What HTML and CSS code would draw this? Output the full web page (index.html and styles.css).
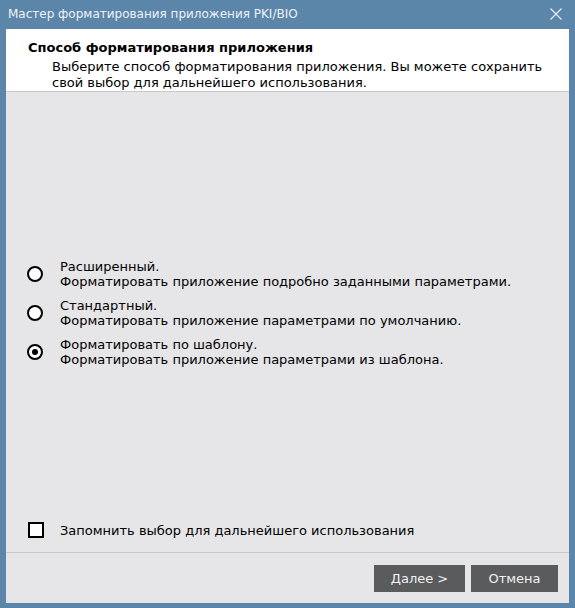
FILE: index.html
```html
<!DOCTYPE html>
<html lang="ru">
<head>
<meta charset="utf-8">
<title>Мастер форматирования приложения PKI/BIO</title>
<link rel="stylesheet" href="styles.css">
</head>
<body>
<div class="window">
  <div class="titlebar">
    <span class="title">Мастер форматирования приложения PKI/BIO</span>
    <svg class="close" width="12" height="12" viewBox="0 0 12 12"><path d="M0.5 0.5 L11.5 11.5 M11.5 0.5 L0.5 11.5" stroke="#e4e9ef" stroke-width="1.3" fill="none"/></svg>
  </div>
  <div class="content">
    <div class="header">
      <div class="h-title">Способ форматирования приложения</div>
      <div class="h-sub">Выберите способ форматирования приложения. Вы можете сохранить свой выбор для дальнейшего использования.</div>
    </div>
    <div class="main">
      <div class="options">
        <div class="option">
          <span class="radio"></span>
          <div class="label"><div>Расширенный.</div><div>Форматировать приложение подробно заданными параметрами.</div></div>
        </div>
        <div class="option">
          <span class="radio"></span>
          <div class="label"><div>Стандартный.</div><div>Форматировать приложение параметрами по умолчанию.</div></div>
        </div>
        <div class="option">
          <span class="radio checked"></span>
          <div class="label"><div>Форматировать по шаблону.</div><div>Форматировать приложение параметрами из шаблона.</div></div>
        </div>
      </div>
      <div class="remember">
        <span class="checkbox"></span>
        <span>Запомнить выбор для дальнейшего использования</span>
      </div>
    </div>
    <div class="footer">
      <button class="btn btn-next">Далее &gt;</button>
      <button class="btn btn-cancel">Отмена</button>
    </div>
  </div>
</div>
</body>
</html>
```
FILE: styles.css
```css
html, body {
  margin: 0;
  padding: 0;
}
body {
  width: 575px;
  height: 608px;
  font-family: "DejaVu Sans", "Liberation Sans", sans-serif;
  font-size: 13px;
  color: #000;
  overflow: hidden;
}
.window {
  width: 575px;
  height: 608px;
  box-sizing: border-box;
  background: #5b86aa;
  padding: 0 6px 5px 6px;
  display: flex;
  flex-direction: column;
}
.titlebar {
  height: 29px;
  flex: 0 0 29px;
  display: flex;
  align-items: center;
  justify-content: space-between;
  color: #eef2f6;
  padding: 0 7px 0 2px;
}
.title {
  font-size: 12px;
  line-height: 16px;
  margin-top: -1px;
}
.close {
  display: block;
  margin-top: -2px;
}
.content {
  flex: 1;
  display: flex;
  flex-direction: column;
  background: #e6e6e8;
}
.header {
  background: #fff;
  height: 63px;
  box-sizing: border-box;
  border-bottom: 1px solid #c9c9cb;
  padding: 10px 0 0 22px;
  flex: 0 0 63px;
}
.h-title {
  font-weight: bold;
  line-height: 18px;
}
.h-sub {
  padding-left: 24px;
  margin-top: 2px;
  width: 500px;
  line-height: 16px;
}
.main {
  flex: 1;
  display: flex;
  flex-direction: column;
  border-bottom: 1px solid #c9c9cb;
}
.options {
  padding-top: 167px;
  padding-left: 21px;
  display: flex;
  flex-direction: column;
  gap: 9px;
}
.option {
  display: flex;
  align-items: center;
}
.label {
  line-height: 15px;
  margin-left: 17px;
}
.radio {
  width: 16px;
  height: 16px;
  box-sizing: border-box;
  border: 2px solid #000;
  border-radius: 50%;
  background: #fff;
  position: relative;
  flex: 0 0 16px;
}
.radio.checked::after {
  content: "";
  position: absolute;
  left: 3px;
  top: 3px;
  width: 6px;
  height: 6px;
  border-radius: 50%;
  background: #000;
}
.remember {
  margin-top: auto;
  padding: 0 0 14px 22px;
  display: flex;
  align-items: center;
}
.checkbox {
  width: 16px;
  height: 16px;
  box-sizing: border-box;
  border: 2px solid #000;
  background: #fff;
  margin-right: 16px;
}
.footer {
  flex: 0 0 50px;
  box-sizing: border-box;
  display: flex;
  justify-content: flex-end;
  gap: 6px;
  padding: 12px 11px 0 0;
}
.btn {
  height: 27px;
  border: none;
  background: #5a5b5c;
  color: #f2f2f2;
  font-family: "DejaVu Sans", "Liberation Sans", sans-serif;
  font-size: 13px;
  padding: 0;
}
.btn-next { width: 91px; }
.btn-cancel { width: 87px; }
```
